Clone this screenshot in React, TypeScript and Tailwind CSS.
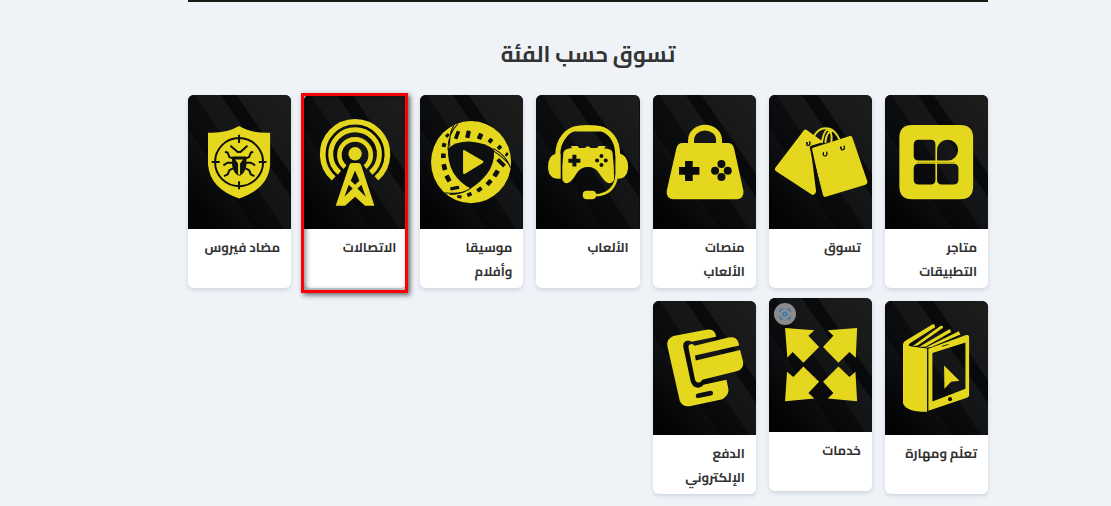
import type { ReactNode } from "react";
import { clsx } from "clsx";

const dark = "#0e0f10";

type Category = {
  label: string;
  art: ReactNode;
  highlighted?: boolean;
  raised?: boolean;
};

const AppsArt = (
  <g transform="translate(-27 -30)">
    <path
      fillRule="evenodd"
      d="M108 120H252Q291 120 291 158V304Q291 342 252 342H108Q70 342 70 304V158Q70 120 108 120Z M128 164H164Q178 164 178 178V226H128Q113 226 113 211V179Q113 164 128 164Z M215 164A31 31 0 0 1 215 226H183V196A32 32 0 0 1 215 164Z M128 236H178V284Q178 298 164 298H128Q113 298 113 283V251Q113 236 128 236Z M183 236H232Q247 236 247 251V283Q247 298 232 298H198Q183 298 183 283Z"
    />
    <path d="M122 232H238" stroke="#a89d18" strokeWidth="2" />
  </g>
);

const ShoppingArt = (
  <g transform="translate(-24 -30)">
    <path d="M128 136Q133 131 139 136L181 166L180 173L148 183L165 318Q163 331 153 329L44 258Q39 253 43 248Z" />
    <path d="M156 188L266 153Q272 151 274 158L319 290Q320 296 313 299L194 335Q188 337 186 330L151 196Q150 190 156 188Z" />
    <g fill="none" stroke="currentColor" strokeWidth="6" strokeLinecap="round">
      <path d="M157 156Q174 124 205 131Q222 136 234 161" />
      <path d="M182 172Q190 132 201 134Q214 140 211 168" />
      <path d="M193 171Q196 140 212 138" />
    </g>
    <g fill="none" stroke={dark} strokeLinecap="round">
      <path d="M152 185L181 176" strokeWidth="4" />
      <path d="M149 187L178 320" strokeWidth="6" />
      <path
        d="M137 174Q136 183 143 181Q148 180 146 170M187 203Q185 213 193 213Q199 212 197 201M239 187Q240 196 246 194Q252 192 249 183"
        strokeWidth="4"
      />
    </g>
    <circle cx="239" cy="187" r="3" fill={dark} />
    <circle cx="138" cy="174" r="3" fill={dark} />
  </g>
);

const ConsolesArt = (
  <g transform="translate(-21 -30)">
    <path
      fillRule="evenodd"
      d="M110 174H126V166A51 47 0 0 1 228 166V174H245Q260 174 264 190L292 318Q294 341 273 342H81Q60 341 62 318L91 190Q95 174 110 174Z M144 174H210V166A33 30 0 0 0 144 166Z M117 228H140V246H160V269H140V288H117V269H99V246H117Z"
    />
    <g fill={dark}>
      <circle cx="226" cy="237" r="12" />
      <circle cx="226" cy="276" r="12" />
      <circle cx="207" cy="257" r="12" />
      <circle cx="245" cy="257" r="12" />
    </g>
  </g>
);

const GamesArt = (
  <g transform="translate(-24 -30)">
    <path
      d="M89 211C89 160 122 132 148 130Q180 127 212 130C240 134 269 160 269 211"
      fill="none"
      stroke="currentColor"
      strokeWidth="15"
    />
    <path d="M120 137Q128 125 151 122Q180 119 209 122Q232 125 239 137L212 139H148Z" />
    <path d="M81 207H98V281H91Q60 280 60 244Q61 213 81 207Z M262 207H279Q299 214 300 244Q299 280 270 281L262 279Z" />
    <path d="M266 270Q261 319 216 329L196 331" fill="none" stroke="currentColor" strokeWidth="8" />
    <rect x="164" y="317" width="40" height="25" rx="12" />
    <path d="M128 183H149L153 189H171Q179 178 188 189H207L211 183H233L228 190Q248 189 253 201Q258 242 258 283Q255 295 240 294Q230 291 212 263Q201 246 180 246Q158 246 147 263Q130 292 119 294Q106 295 103 283Q101 242 106 202Q111 190 132 189Z" />
    <g fill={dark}>
      <path d="M133 209H145V221H157V233H145V244H133V233H121V221H133Z" />
      <circle cx="220" cy="213" r="6" />
      <circle cx="220" cy="240" r="6" />
      <circle cx="207" cy="226" r="6" />
      <circle cx="233" cy="226" r="6" />
    </g>
  </g>
);

const holes: [number, number, number, number, number][] = [
  [135, 150, 11, 25, 20],
  [168, 148, 13, 22, 12],
  [204, 154, 14, 18, 25],
  [235, 167, 12, 14, 35],
  [262, 187, 11, 13, 45],
  [284, 208, 8, 11, 30],
  [267, 233, 12, 29, -45],
  [252, 265, 14, 20, 32],
  [231, 292, 13, 18, 42],
  [202, 313, 12, 16, 55],
  [172, 328, 11, 14, 65],
  [142, 335, 9, 13, 100],
  [128, 309, 10, 27, 78],
  [108, 280, 14, 20, -28],
  [97, 246, 14, 18, -14],
  [94, 212, 14, 14, 0],
  [96, 180, 12, 12, 15],
  [106, 151, 9, 12, 45],
];

const MusicArt = (
  <g transform="translate(-24 -30)">
    <ellipse cx="177" cy="231" rx="120" ry="123" />
    <g fill={dark}>
      <path d="M108 190Q134 167 179 170Q220 173 246 194Q248 236 225 266Q205 292 176 310Q144 295 124 263Q106 231 108 190Z" />
      {holes.map(([x, y, w, h, r]) => (
        <rect
          key={`${x}-${y}`}
          x={x - w / 2}
          y={y - h / 2}
          width={w}
          height={h}
          rx="2"
          transform={`rotate(${r} ${x} ${y})`}
        />
      ))}
    </g>
    <g fill="none" stroke={dark} strokeWidth="3">
      <path d="M108 196Q107 145 137 117M113 184Q111 140 126 121M244 190Q284 213 295 248M245 198Q275 218 291 238M100 323Q145 330 177 309M113 328Q145 328 166 315" />
    </g>
    <path d="M153 197Q154 193 159 196L213 228Q216 231 212 234L159 266Q153 269 153 262Z" />
  </g>
);

const AntennaArt = (
  <g transform="translate(-24 -30)">
    <g fill="none" stroke="currentColor">
      <path d="M113 280A97 97 0 1 1 241 280" strokeWidth="17" />
      <path d="M130 263A73 73 0 1 1 224 263" strokeWidth="15" />
      <path d="M147 246A47 47 0 1 1 207 246" strokeWidth="14" />
    </g>
    <path d="M158 228H196L204 258L150 258Z" fill={dark} />
    <circle cx="177" cy="206" r="20" />
    <path d="M160 240Q161 234 168 234H187Q193 234 195 240L235 362H207L177 335L147 362H119Z" />
    <g fill={dark}>
      <path d="M177 256L190 287L177 299L164 287Z" />
      <path d="M158 299L170 310L145 335ZM196 299L184 310L209 335Z" />
    </g>
  </g>
);

const AntivirusArt = (
  <g transform="translate(-24 -30)">
    <path d="M84 143Q138 146 177 123Q216 146 270 143V239Q265 310 177 340Q90 310 84 239Z" />
    <g fill="none" stroke={dark} strokeWidth="6">
      <circle cx="177" cy="231" r="72" />
      <path d="M177 149V174M177 288V312M95 231H119M236 231H259" />
    </g>
    <g fill="none" stroke={dark} strokeWidth="6" strokeLinejoin="round">
      <path d="M151 182L173 201H181L202 182" />
      <path d="M160 220L148 216L143 203L135 200M195 220L207 216L212 203L219 200" />
      <path d="M156 233H142L130 241M198 233H213L225 241" />
      <path d="M159 250L148 255L143 268L132 273M196 250L207 255L212 268L223 273" />
    </g>
    <path d="M157 214H198L196 222H158Z" fill={dark} />
    <path d="M156 222H199Q202 260 181 271H174Q153 260 156 222Z" fill={dark} />
    <path d="M165 223H189L180 235V268H174V235Z" />
  </g>
);

const LearningArt = (
  <g transform="translate(-27 -27)">
    <path d="M81 156Q82 149 92 144L170 97Q177 95 177 106L104 152Q90 161 107 163L153 169V359Q92 360 81 334Z" />
    <path d="M110 162L193 102Q201 99 201 107L125 160ZM130 164L221 111L225 120L148 164ZM148 167L248 118L253 127L166 165Z" />
    <path
      fillRule="evenodd"
      d="M157 170L270 129Q279 127 279 135V311Q278 315 270 318L157 356Z M169 183V328L268 290V151Z"
    />
    <path d="M204 220L250 266L225 269L205 290Z" />
    <circle cx="222" cy="321" r="6" fill={dark} />
    <path d="M197 163L217 157" stroke={dark} strokeWidth="3" />
  </g>
);

const ServicesArt = (
  <g transform="translate(-24 -18)">
    <path d="M72 108L160 115L142 131L174 165L127 212L95 180L79 197Z" />
    <path d="M288 108L200 115L217 131L186 165L232 212L265 180L284 197Z" />
    <path d="M72 327L160 319L142 303L174 269L127 223L97 255L78 239Z" />
    <path d="M288 327L200 319L217 303L186 269L232 223L265 255L283 239Z" />
  </g>
);

const PaymentArt = (
  <g transform="translate(-21 -27)">
    <path d="M82 132L181 113Q201 109 208 125L210 134L137 149Q121 140 113 153Q110 160 113 170L134 268Q143 292 164 285Q169 283 172 278L241 263L247 291Q249 309 229 321L131 342Q108 345 101 325L64 162Q61 140 82 132Z" />
    <path d="M146 161L247 136Q271 132 277 151L279 160L147 190L149 205L282 174L291 209Q294 229 274 237L169 263Q164 273 154 271Q149 270 147 263L128 170Q125 157 136 156Q142 157 146 161Z" />
    <path d="M156 311L194 303" stroke={dark} strokeWidth="14" strokeLinecap="round" />
  </g>
);

const categories: Category[] = [
  { label: "متاجر التطبيقات", art: AppsArt },
  { label: "تسوق", art: ShoppingArt },
  { label: "منصات الألعاب", art: ConsolesArt },
  { label: "الألعاب", art: GamesArt },
  { label: "موسيقا وأفلام", art: MusicArt },
  { label: "الاتصالات", art: AntennaArt, highlighted: true },
  { label: "مضاد فيروس", art: AntivirusArt },
  { label: "تعلُم ومهارة", art: LearningArt },
  { label: "خدمات", art: ServicesArt, raised: true },
  { label: "الدفع الإلكتروني", art: PaymentArt },
];

function Backdrop() {
  return (
    <>
      <rect width="309" height="402" fill="url(#panel)" />
      <path d="M98 0H145L309 238V306Z" fill="#030405" opacity="0.7" />
      <path d="M0 0H20L287 402H202L0 100Z" fill="#030405" opacity="0.5" />
    </>
  );
}

function CategoryCard({ label, art, highlighted, raised }: Category) {
  return (
    <li className={clsx("relative", raised && "-translate-y-[3px]")}>
      <a
        href="#"
        className="flex h-full flex-col overflow-hidden rounded-md bg-white shadow-[0_2px_4px_rgba(40,60,90,0.16)]"
      >
        <svg viewBox="0 0 309 402" className="block w-full bg-[#0c0d0e] text-[#e5d71e]" fill="currentColor" aria-hidden="true">
          <Backdrop />
          {art}
        </svg>
        <span className="block px-[11px] pt-1.5 pb-[5px] text-[13px] leading-6 font-bold text-[#333333]">{label}</span>
      </a>
      {highlighted && (
        <span className="pointer-events-none absolute -top-0.5 -right-px -bottom-[5px] -left-[3px] border-3 border-[#fb0007] shadow-[2px_2px_5px_rgba(0,0,0,0.6),inset_2px_0_5px_rgba(0,0,0,0.45)]" />
      )}
      {raised && (
        <button
          type="button"
          aria-label="بحث بالصورة"
          className="absolute top-[5px] left-[5px] flex size-[22px] items-center justify-center rounded-full bg-[#8b8b8b]"
        >
          <svg viewBox="0 0 12 12" className="size-3" fill="none" stroke="#3478bd" strokeWidth="1.4" aria-hidden="true">
            <path d="M1 4V3Q1 1 3 1H4M8 1H9Q11 1 11 3V4M11 8V9Q11 11 9 11H8M4 11H3Q1 11 1 9V8" />
            <circle cx="6" cy="6" r="1.8" />
          </svg>
        </button>
      )}
    </li>
  );
}

export default function App() {
  return (
    <div
      dir="rtl"
      lang="ar"
      className="min-h-screen bg-[#eff3f8] pl-[65px] font-['Cairo','DejaVu_Sans',sans-serif]"
    >
      <svg className="absolute size-0" aria-hidden="true">
        <defs>
          <linearGradient id="panel" x1="0.1" y1="0.9" x2="0.9" y2="0">
            <stop offset="0" stopColor="#030304" />
            <stop offset="0.45" stopColor="#131416" />
            <stop offset="1" stopColor="#1c1c1c" />
          </linearGradient>
        </defs>
      </svg>
      <main className="mx-auto max-w-[800px]">
        <div className="h-0.5 bg-[#1b1b16]" />
        <h1 className="pt-9 pb-[25px] text-center text-[22px] leading-8 font-bold text-[#333333]">تسوق حسب الفئة</h1>
        <ul className="grid grid-cols-7 gap-[13px]">
          {categories.map((category) => (
            <CategoryCard key={category.label} {...category} />
          ))}
        </ul>
      </main>
    </div>
  );
}
